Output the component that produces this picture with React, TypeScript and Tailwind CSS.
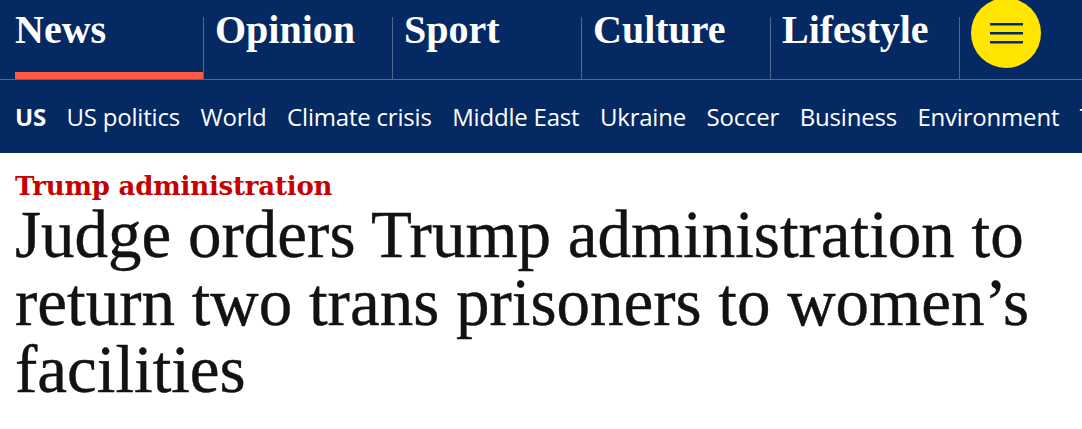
const pillars = ['News', 'Opinion', 'Sport', 'Culture', 'Lifestyle'];

const subNav = [
  'US politics',
  'World',
  'Climate crisis',
  'Middle East',
  'Ukraine',
  'Soccer',
  'Business',
  'Environment',
  'Tech',
];

const headlineFont = { fontFamily: '"Liberation Serif", "DejaVu Serif", serif' };

function PillarNav() {
  return (
    <div className="flex h-[80px] border-b border-[#506991] pl-[14px]">
      {pillars.map((name, i) => (
        <div
          key={name}
          className={
            i === 0
              ? 'mt-[17px] flex w-[189px] flex-col pl-[1px]'
              : 'mt-[17px] flex w-[189px] flex-col border-l border-[#506991] pl-[11px]'
          }
        >
          <span
            className="-mt-[7px] text-[40px] leading-[40px] font-bold text-white"
            style={headlineFont}
          >
            {name}
          </span>
          {i === 0 && <div className="mt-auto h-[7px] bg-[#ff5943]" />}
        </div>
      ))}
      <div className="mt-[17px] border-l border-[#506991] pl-[11px]">
        <button
          aria-label="Show more"
          className="-mt-[19px] flex h-[70px] w-[70px] items-center justify-center rounded-full bg-[#ffe500]"
        >
          <svg width="33" height="21" viewBox="0 0 33 21">
            <rect x="0" y="0" width="33" height="2.5" fill="#052962" />
            <rect x="0" y="9" width="33" height="2.5" fill="#052962" />
            <rect x="0" y="18" width="33" height="2.5" fill="#052962" />
          </svg>
        </button>
      </div>
    </div>
  );
}

function SubNav() {
  return (
    <ul
      className="flex h-[73px] items-center gap-[20.5px] overflow-hidden whitespace-nowrap pl-[15px] text-[24px] tracking-[-0.2px] text-white"
      style={{ fontFamily: '"Open Sans", "Noto Sans", sans-serif' }}
    >
      <li className="font-bold">US</li>
      {subNav.map((item) => (
        <li key={item}>{item}</li>
      ))}
    </ul>
  );
}

export default function App() {
  return (
    <div className="h-[429px] w-[1082px] overflow-hidden bg-white">
      <header className="bg-[#052962]">
        <PillarNav />
        <SubNav />
      </header>
      <main className="px-[15px] pt-[19px]">
        <a
          className="block text-[26px] leading-[28px] font-bold tracking-[-0.2px] text-[#c70000]"
          style={{ fontFamily: '"DejaVu Serif", serif' }}
        >
          Trump administration
        </a>
        <h1
          className="mt-[1px] text-[67px] leading-[67.5px] text-[#121212] [-webkit-text-stroke:0.4px_#121212]"
          style={headlineFont}
        >
          Judge orders Trump administration to
          <br />
          return two trans prisoners to women’s
          <br />
          facilities
        </h1>
      </main>
    </div>
  );
}
